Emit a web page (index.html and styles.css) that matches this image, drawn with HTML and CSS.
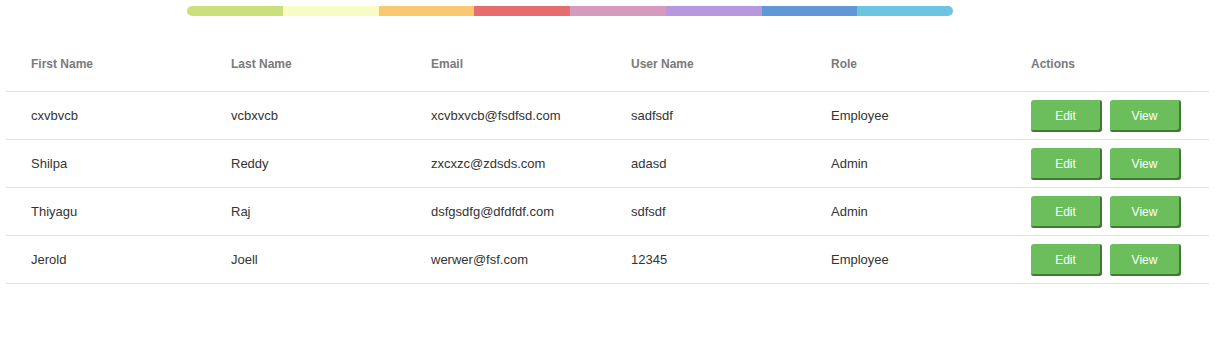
FILE: index.html
```html
<!DOCTYPE html>
<html>
<head>
<meta charset="utf-8">
<link rel="stylesheet" href="styles.css">
</head>
<body>
<div class="page">
  <div class="rainbow">
    <span class="seg c1"></span><span class="seg c2"></span><span class="seg c3"></span><span class="seg c4"></span><span class="seg c5"></span><span class="seg c6"></span><span class="seg c7"></span><span class="seg c8"></span>
  </div>
  <table class="users">
    <thead>
      <tr><th>First Name</th><th>Last Name</th><th>Email</th><th>User Name</th><th>Role</th><th>Actions</th></tr>
    </thead>
    <tbody>
      <tr><td>cxvbvcb</td><td>vcbxvcb</td><td>xcvbxvcb@fsdfsd.com</td><td>sadfsdf</td><td>Employee</td><td class="actions"><button class="btn">Edit</button><button class="btn">View</button></td></tr>
      <tr><td>Shilpa</td><td>Reddy</td><td>zxcxzc@zdsds.com</td><td>adasd</td><td>Admin</td><td class="actions"><button class="btn">Edit</button><button class="btn">View</button></td></tr>
      <tr><td>Thiyagu</td><td>Raj</td><td>dsfgsdfg@dfdfdf.com</td><td>sdfsdf</td><td>Admin</td><td class="actions"><button class="btn">Edit</button><button class="btn">View</button></td></tr>
      <tr><td>Jerold</td><td>Joell</td><td>werwer@fsf.com</td><td>12345</td><td>Employee</td><td class="actions"><button class="btn">Edit</button><button class="btn">View</button></td></tr>
    </tbody>
  </table>
</div>
</body>
</html>
```

FILE: styles.css
```css
* { box-sizing: border-box; }
body {
  margin: 0;
  background: #fff;
  font-family: "Liberation Sans", Arial, sans-serif;
  font-size: 13px;
  color: #333;
}
.page {
  padding: 6px 8px 0 6px;
}
.rainbow {
  display: flex;
  width: 766px;
  height: 10px;
  margin-left: 181px;
  border-radius: 5px;
  overflow: hidden;
}
.seg { flex: 1; }
.c1 { background: #cbe07c; }
.c2 { background: #f8fbc4; }
.c3 { background: #f9c86f; }
.c4 { background: #e66d6d; }
.c5 { background: #d59abd; }
.c6 { background: #b898dd; }
.c7 { background: #5e98d7; }
.c8 { background: #6cc4e1; }

.users {
  width: 1203px;
  border-collapse: collapse;
  margin-top: 15px;
  table-layout: fixed;
}
.users th, .users td {
  width: 200px;
  text-align: left;
  padding: 0 0 0 25px;
}
.users th:last-child {
  width: 203px;
}
.users th {
  font-size: 12px;
  font-weight: bold;
  color: #7a7a7a;
  height: 60px;
  padding-top: 6px;
  border-bottom: 1px solid #e0e0e0;
}
.users td {
  height: 48px;
  border-bottom: 1px solid #e0e0e0;
}
.users td.actions {
  white-space: nowrap;
  padding-top: 1px;
}
.btn {
  display: inline-block;
  vertical-align: middle;
  width: 71px;
  height: 32px;
  margin-right: 8px;
  border: none;
  border-radius: 3px;
  background: #6cbd5c;
  box-shadow: inset -2px -2px 0 #3e7c32;
  color: #fff;
  font-family: "Liberation Sans", Arial, sans-serif;
  font-size: 12px;
  padding: 0 2px 0 0;
  cursor: pointer;
}
```
